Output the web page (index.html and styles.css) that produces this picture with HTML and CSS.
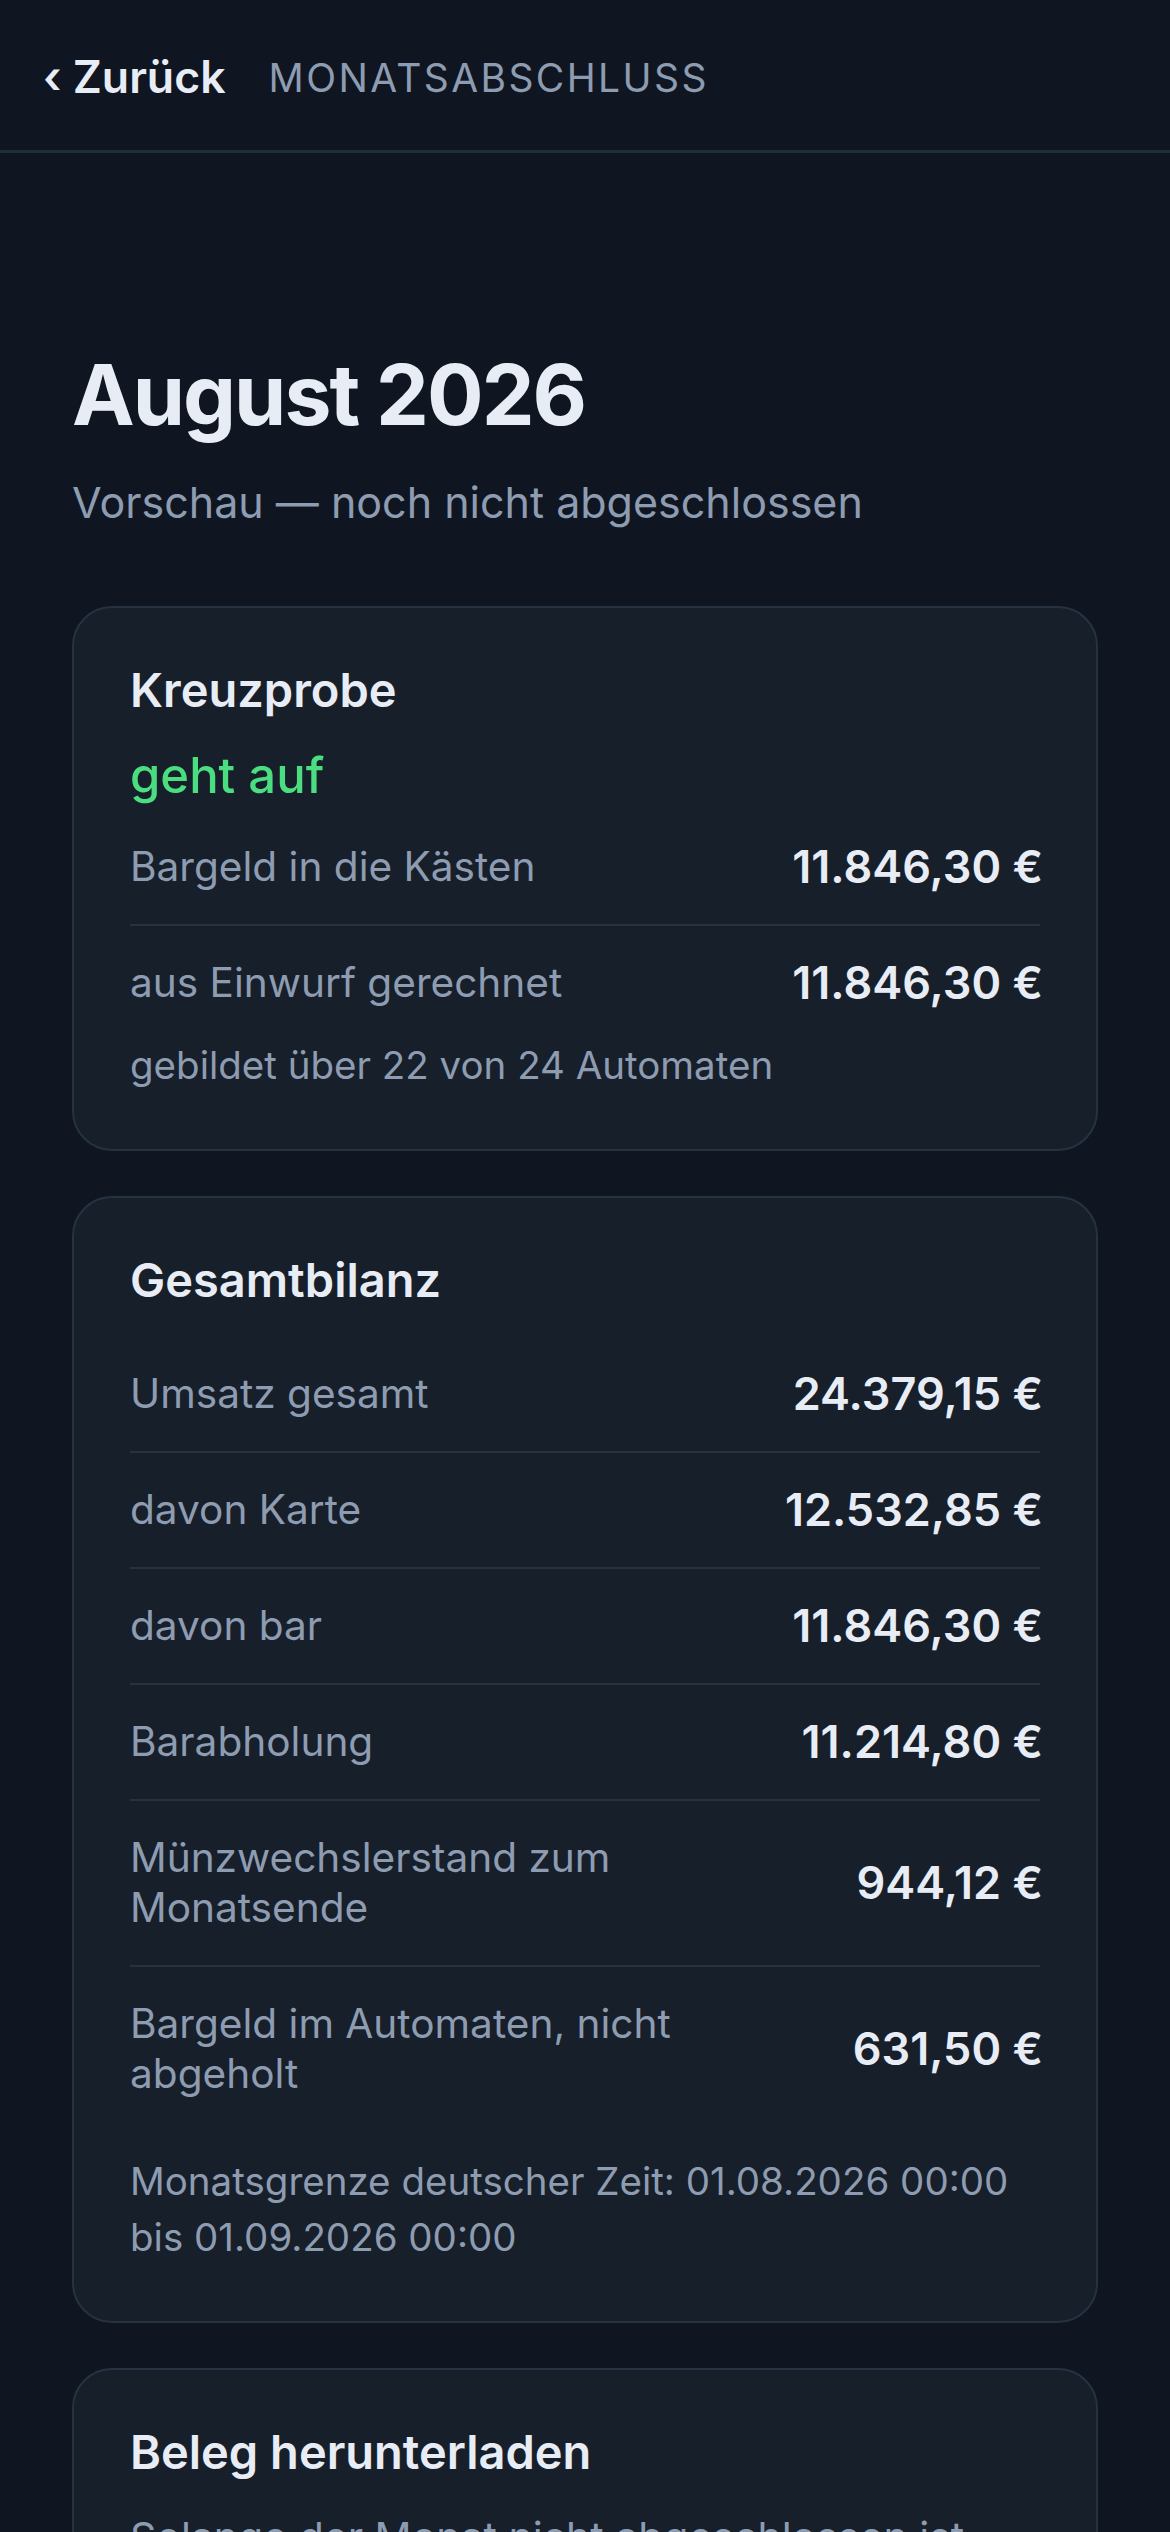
FILE: index.html
```html
<!DOCTYPE html>
<html lang="de">
<head>
<meta charset="utf-8">
<title>Monatsabschluss – August 2026</title>
<link rel="stylesheet" href="styles.css">
</head>
<body>
<header class="topbar">
  <a class="back" href="#"><span class="chev">‹</span> Zurück</a>
  <span class="crumb">MONATSABSCHLUSS</span>
</header>
<main class="page">
  <h1 class="title">August 2026</h1>
  <p class="subtitle">Vorschau — noch nicht abgeschlossen</p>

  <section class="card">
    <h2 class="card-title">Kreuzprobe</h2>
    <div class="status">geht auf</div>
    <div class="rows">
      <div class="row"><span class="label">Bargeld in die Kästen</span><span class="amount">11.846,30 €</span></div>
      <div class="row"><span class="label">aus Einwurf gerechnet</span><span class="amount">11.846,30 €</span></div>
    </div>
    <p class="note note-tight">gebildet über 22 von 24 Automaten</p>
  </section>

  <section class="card">
    <h2 class="card-title">Gesamtbilanz</h2>
    <div class="rows">
      <div class="row"><span class="label">Umsatz gesamt</span><span class="amount">24.379,15 €</span></div>
      <div class="row"><span class="label">davon Karte</span><span class="amount">12.532,85 €</span></div>
      <div class="row"><span class="label">davon bar</span><span class="amount">11.846,30 €</span></div>
      <div class="row"><span class="label">Barabholung</span><span class="amount">11.214,80 €</span></div>
      <div class="row"><span class="label">Münzwechslerstand zum Monatsende</span><span class="amount">944,12 €</span></div>
      <div class="row"><span class="label">Bargeld im Automaten, nicht abgeholt</span><span class="amount">631,50 €</span></div>
    </div>
    <p class="note">Monatsgrenze deutscher Zeit: 01.08.2026 00:00 bis 01.09.2026 00:00</p>
  </section>

  <section class="card">
    <h2 class="card-title">Beleg herunterladen</h2>
    <p class="text">Solange der Monat nicht abgeschlossen ist, steht der Beleg nur als Vorschau zur Verfügung.</p>
  </section>
</main>
</body>
</html>
```

FILE: styles.css
```css
* { box-sizing: border-box; }

html, body {
  margin: 0;
  padding: 0;
  background: #0f1621;
}

body {
  font-family: Inter, "Noto Sans", "Liberation Sans", sans-serif;
  color: #e8edf5;
  -webkit-font-smoothing: antialiased;
}

.topbar {
  height: 153px;
  display: flex;
  align-items: center;
  gap: 43px;
  padding: 6px 43px 0;
  border-bottom: 3px solid #222d3b;
  background: #0f1621;
}

.back {
  color: #e8edf5;
  text-decoration: none;
  font-size: 44.6px;
  font-weight: 600;
  line-height: 1.2;
}

.chev {
  font-weight: 600;
}

.crumb {
  color: #8e9cb1;
  font-size: 39px;
  font-weight: 400;
  letter-spacing: 2.4px;
  line-height: 1.2;
}

.page {
  padding: 192px 72px 0;
}

.title {
  margin: 0;
  font-size: 84px;
  line-height: 1.2;
  font-weight: 700;
  letter-spacing: -2px;
  color: #e8edf5;
}

.subtitle {
  margin: 26px 0 0;
  font-size: 43px;
  line-height: 1.4;
  color: #8e9cb1;
}

.card {
  margin-top: 45px;
  background: #171f2b;
  border: 2px solid #263242;
  border-radius: 40px;
  padding: 54px 56px 56px;
}

.subtitle + .card {
  margin-top: 74px;
}

.card-title {
  margin: 0 0 30px;
  font-size: 47px;
  line-height: 55px;
  font-weight: 600;
  color: #e8edf5;
}

.status {
  margin-bottom: 5px;
  font-size: 49px;
  line-height: 58px;
  font-weight: 500;
  color: #4ade80;
}

.rows {
  display: flex;
  flex-direction: column;
}

.row {
  display: flex;
  align-items: center;
  justify-content: space-between;
  gap: 24px;
  padding: 32px 0;
}

.row + .row {
  border-top: 2px solid #263242;
}

.label {
  max-width: 620px;
  font-size: 40.6px;
  line-height: 50px;
  color: #8e9cb1;
}

.amount {
  flex-shrink: 0;
  white-space: nowrap;
  font-size: 45px;
  line-height: 50px;
  font-weight: 600;
  color: #e8edf5;
  margin-right: -3px;
}

.note {
  margin: 22px 0 0;
  font-size: 38.5px;
  line-height: 56px;
  color: #8e9cb1;
}

.note-tight {
  margin-top: -3px;
}

.text {
  margin: 0;
  font-size: 41px;
  line-height: 1.4;
  color: #8e9cb1;
}
```
